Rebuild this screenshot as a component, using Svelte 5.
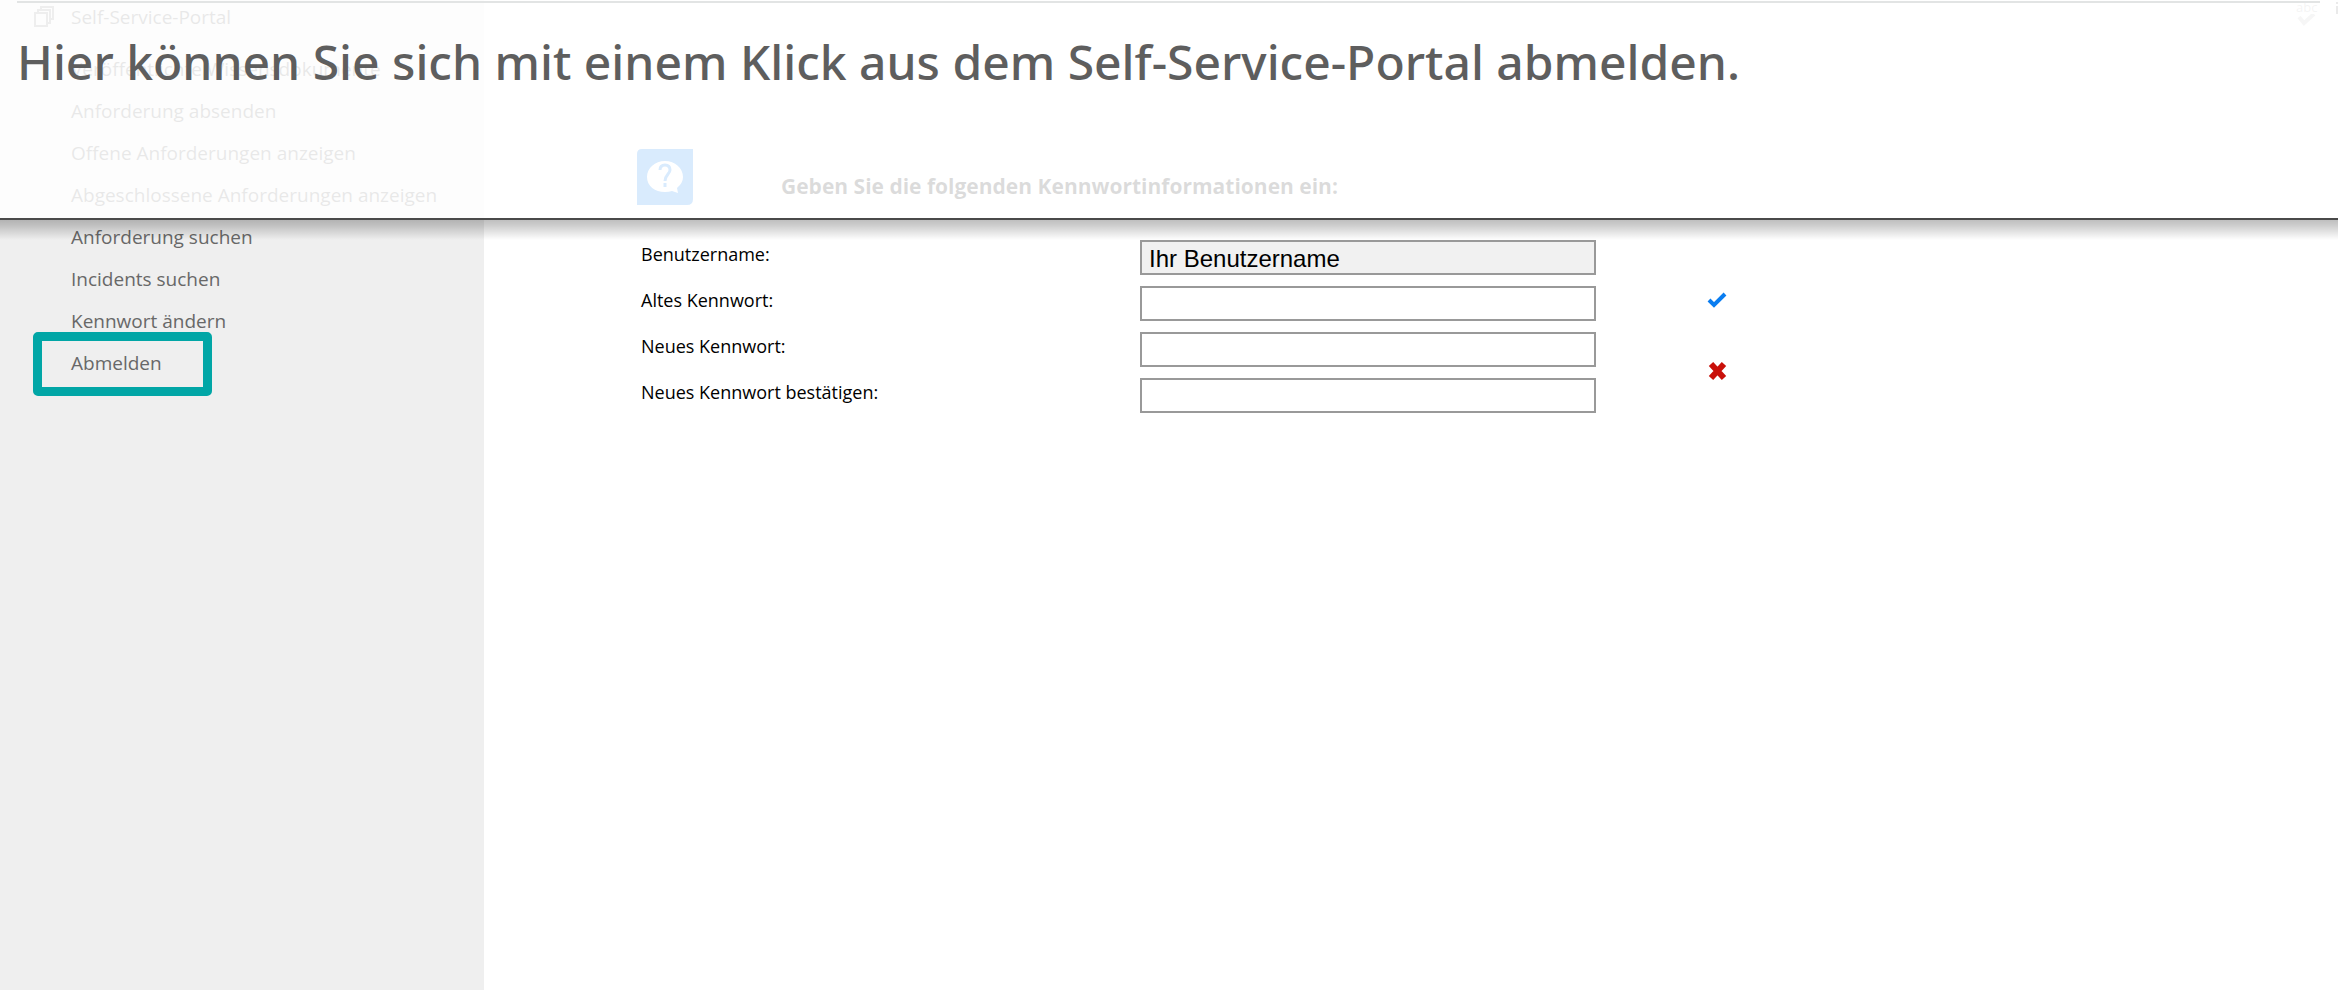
<script>
  const menu = [
    'Veröffentlichte Wissensdokumente',
    'Anforderung absenden',
    'Offene Anforderungen anzeigen',
    'Abgeschlossene Anforderungen anzeigen',
    'Anforderung suchen',
    'Incidents suchen',
    'Kennwort ändern',
    'Abmelden'
  ];
  const fields = [
    { id: 'user', label: 'Benutzername:', type: 'text', value: 'Ihr Benutzername', readonly: true },
    { id: 'old', label: 'Altes Kennwort:', type: 'password', value: '', readonly: false },
    { id: 'new', label: 'Neues Kennwort:', type: 'password', value: '', readonly: false },
    { id: 'confirm', label: 'Neues Kennwort bestätigen:', type: 'password', value: '', readonly: false }
  ];
</script>

<div class="page">
  <nav class="side">
    <div class="root">
      <svg width="22" height="22" viewBox="0 0 22 22" fill="none" stroke="#8a8a8a" stroke-width="2">
        <path d="M2 7h12v13H2zM5 7V4h12v13h-3M8 4V1h12v12h-3" />
      </svg>
      <a href="#portal">Self-Service-Portal</a>
    </div>
    <ul>
      {#each menu as item}
        <li class:active={item === 'Abmelden'}><a href="#menu">{item}</a></li>
      {/each}
    </ul>
  </nav>

  <main>
    <div class="tools">
      <button class="spell" aria-label="abc Rechtschreibung">
        <span>abc</span>
        <svg width="24" height="12" viewBox="0 0 24 12">
          <path d="M3 3l5 6L18 0" fill="none" stroke="#c4c4c4" stroke-width="4" />
        </svg>
      </button>
      <button aria-label="Info">
        <svg width="2" height="14" viewBox="0 0 2 14" fill="#737373"><path d="M0 2h2v2H0zM0 6h2v8H0z" /></svg>
      </button>
    </div>
    <header class="intro">
      <svg width="56" height="56" viewBox="0 0 56 56">
        <path d="M5 0H56V50Q56 56 50 56H0V5Q0 0 5 0Z" fill="#0078ef" />
        <path d="M28 12C18 12 10 19 10 28S18 43 28 43Q32 43 35 42L41 44L40 39Q46 34 46 28C46 19 38 12 28 12Z" fill="#fff" />
        <path d="M23 21Q23 16 28 16T33 21C33 25 28 26 28 32M28 34v4" fill="none" stroke="#0078ef" stroke-width="3" />
      </svg>
      <h2>Geben Sie die folgenden Kennwortinformationen ein:</h2>
    </header>
    <div class="form">
      <form>
        {#each fields as f}
          <div class="row">
            <label for={f.id}>{f.label}</label>
            <input id={f.id} type={f.type} value={f.value} readonly={f.readonly} />
          </div>
        {/each}
      </form>
      <div class="actions">
        <button aria-label="Bestätigen">
          <svg width="22" height="20" viewBox="0 0 22 20"><path d="M2 9l5 5L18 3" fill="none" stroke="#0a7df0" stroke-width="4" /></svg>
        </button>
        <button aria-label="Abbrechen">
          <svg width="22" height="20" viewBox="0 0 22 20"><path d="M4 3l13 14M17 3L4 17" fill="none" stroke="#c9100a" stroke-width="6" /></svg>
        </button>
      </div>
    </div>
  </main>

  <div class="banner">
    <div class="rule"></div>
    <h1>Hier können Sie sich mit einem Klick aus dem Self-Service-Portal abmelden.</h1>
  </div>
</div>

<style>
  .page {
    position: relative;
    display: grid;
    grid-template-columns: 484px 1fr;
    min-height: 100vh;
    background: #fff;
    font-family: 'Open Sans', 'Noto Sans', sans-serif;
  }
  .side {
    background: #efefef;
    font-size: 19px;
    line-height: 42px;
    color: #686868;
    font-weight: 500;
  }
  .side a {
    color: inherit;
    text-decoration: none;
  }
  .root {
    display: flex;
    align-items: center;
    gap: 16px;
    height: 34px;
    padding-left: 33px;
    margin-bottom: 14px;
  }
  ul {
    list-style: none;
    margin: 0;
    padding: 0;
  }
  li {
    position: relative;
    padding-left: 71px;
  }
  .active::after {
    content: '';
    position: absolute;
    left: 33px;
    top: -10px;
    width: 161px;
    height: 46px;
    border: 9px solid #01a6a6;
    border-radius: 5px;
  }
  button {
    display: block;
    padding: 0;
    border: 0;
    background: none;
  }
  svg {
    display: block;
  }
  .tools {
    display: flex;
    justify-content: flex-end;
    align-items: flex-start;
    gap: 16px;
    height: 26px;
  }
  .spell {
    font: 13px 'Open Sans', sans-serif;
    line-height: 14px;
    color: #b5b5b5;
    text-align: left;
  }
  .spell span {
    display: block;
  }
  .intro {
    display: flex;
    align-items: center;
    gap: 88px;
    padding: 123px 0 0 153px;
  }
  h2 {
    margin: 18px 0 0;
    font-size: 21px;
    line-height: 28px;
    font-weight: 700;
    color: #111;
  }
  .form {
    display: flex;
    padding: 35px 0 0 157px;
  }
  .row {
    display: flex;
    height: 46px;
  }
  label {
    width: 499px;
    font-size: 18px;
    line-height: 28px;
    color: #000;
  }
  input {
    box-sizing: border-box;
    width: 456px;
    height: 35px;
    padding: 2px 7px 0;
    border: 2px solid #999;
    background: #fff;
    font: 24px 'Liberation Sans', sans-serif;
    color: #000;
  }
  input:read-only {
    background: #f1f1f1;
  }
  .actions {
    display: flex;
    flex-direction: column;
    gap: 50px;
    padding: 51px 0 0 111px;
  }
  .banner {
    position: absolute;
    inset: 0 0 auto 0;
    height: 218px;
    border-bottom: 2px solid #4a4a4a;
    background: rgba(255, 255, 255, 0.85);
  }
  .banner::after {
    content: '';
    position: absolute;
    inset: 220px 0 auto 0;
    height: 20px;
    background: linear-gradient(rgba(0, 0, 0, 0.25), rgba(0, 0, 0, 0.2) 25%, rgba(0, 0, 0, 0));
  }
  .rule {
    height: 2px;
    margin: 1px 18px 0 17px;
    background: #e2e4e4;
  }
  h1 {
    margin: 21px 0 0 17px;
    font-family: 'Noto Sans', sans-serif;
    font-size: 48px;
    line-height: 76px;
    font-weight: 500;
    color: #5e5e5e;
  }
</style>
